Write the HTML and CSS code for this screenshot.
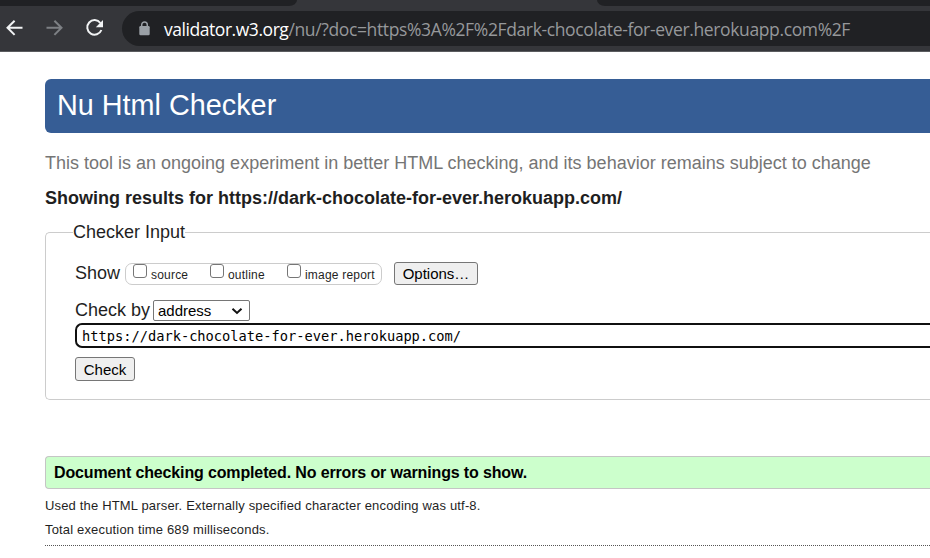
FILE: index.html
```html
<!DOCTYPE html>
<html lang="en">
<head>
<meta charset="utf-8">
<title>Nu Html Checker</title>
<link rel="stylesheet" href="styles.css">
</head>
<body>
<div class="browser">
  <div class="tabs"><div class="tab-left"></div><div class="tab-right"></div></div>
  <div class="toolbar">
    <svg class="nav" width="120" height="35" viewBox="0 0 120 35" fill="none" stroke-width="2">
      <path d="M22.500 16.800H8M14.600 9.700L7.500 16.800l7.100 7.100" stroke="#f1f3f4"/>
      <path d="M46.500 16.800H61M54.400 9.700l7.100 7.100-7.100 7.100" stroke="#7d8084"/>
      <path d="M100.400 12A7.300 7.300 0 1 0 101.400 19" stroke="#f1f3f4"/>
      <path d="M103 9v7.200h-7.200z" fill="#f1f3f4"/>
    </svg>
    <div class="omnibox">
      <svg class="lock" width="11" height="15" viewBox="0 0 11 15">
        <path d="M2.700 6V3.700a2.800 2.800 0 0 1 5.600 0V6" fill="none" stroke="#9aa0a6" stroke-width="1.500"/>
        <rect x=".3" y="5" width="10.400" height="9.300" rx="1.200" fill="#9aa0a6"/>
      </svg>
      <span class="url"><span class="host">validator.w3.org</span><span class="path">/nu/?doc=https%3A%2F%2Fdark-chocolate-for-ever.herokuapp.com%2F</span></span>
    </div>
  </div>
</div>
<main>
  <h1><span>Nu Html Checker</span></h1>
  <p class="tagline"><span>This tool is an ongoing experiment in better HTML checking, and its behavior remains subject to change</span></p>
  <h2><span>Showing results for https://dark-chocolate-for-ever.herokuapp.com/</span></h2>
  <form class="panel">
    <div class="legend">Checker Input</div>
    <div class="row show">
      <span class="label">Show</span>
      <div class="checks">
        <label class="source"><i class="box"></i><span>source</span></label>
        <label class="outline"><i class="box"></i><span>outline</span></label>
        <label class="report"><i class="box"></i><span>image report</span></label>
      </div>
      <button type="button" class="options">Options…</button>
    </div>
    <div class="row by">
      <span class="label">Check by</span>
      <div class="select"><span>address</span>
        <svg width="12" height="8" viewBox="0 0 12 8"><path d="M1.500 1.800L6 6l4.500-4.200" fill="none" stroke="#111" stroke-width="2"/></svg>
      </div>
    </div>
    <div class="address"><span>https://dark-chocolate-for-ever.herokuapp.com/</span></div>
    <button type="button" class="submit">Check</button>
  </form>
  <p class="success"><span>Document checking completed. No errors or warnings to show.</span></p>
  <p class="note"><span class="parser">Used the HTML parser. Externally specified character encoding was utf-8.</span></p>
  <p class="note"><span class="time">Total execution time 689 milliseconds.</span></p>
  <div class="rule"></div>
</main>
</body>
</html>
```
FILE: styles.css
```css
* { box-sizing: border-box; }
body { margin: 0; width: 930px; height: 558px; overflow: hidden; background: #fff; color: #1f1f1f; font-family: "Liberation Sans", Arial, sans-serif; }
h1, h2, p { margin: 0; font-weight: normal; white-space: nowrap; }
.browser { height: 52px; background: #35363a; border-bottom: 1px solid #5b5c5f; }
.tabs { height: 6px; display: flex; justify-content: space-between; }
.tab-left { width: 297px; background: #202124; border-bottom-right-radius: 8px 6px; }
.tab-right { width: 333px; background: #202124; border-bottom-left-radius: 8px 6px; }
.toolbar { display: flex; padding-top: 5px; }
.nav { flex: none; margin-right: 2px; }
.omnibox { flex: 1; height: 35px; display: flex; align-items: center; background: #202124; border-radius: 18px 0 0 18px; padding-left: 17px; }
.lock { flex: none; margin-right: 14px; }
.url { padding-top: 1px; font: 17.500px/34px "Open Sans", "Noto Sans", sans-serif; white-space: nowrap; }
.host { color: #fff; letter-spacing: -.45px; }
.path { color: #96989b; letter-spacing: -.37px; }
main { padding: 27px 0 0 45px; }
h1 { height: 54px; padding-left: 12px; background: #365d95; color: #fff; border-radius: 6px 0 0 6px; font-size: 28.800px; line-height: 53px; }
.tagline { margin-top: 19px; color: #757575; font-size: 18px; line-height: 22px; }
h2 { margin-top: 13px; font-size: 18px; line-height: 22px; font-weight: bold; }
.panel { height: 168px; margin-top: 23px; padding-left: 29px; border: 1px solid #ccc; border-right: 0; border-radius: 5px 0 0 5px; }
.legend { width: 112px; height: 22px; margin: -12px 0 0 -2px; background: #fff; font-size: 18px; line-height: 22px; white-space: nowrap; }
.row { display: flex; font-size: 18px; }
.show { height: 24px; margin-top: 19px; }
.label { line-height: 22px; white-space: nowrap; }
.show .label { width: 50px; }
.checks { width: 257px; height: 22px; margin-top: 1px; display: flex; border: 1px solid #ccc; border-radius: 7px; padding-left: 7px; font-size: 12px; }
.checks label { display: flex; white-space: nowrap; }
.checks span { line-height: 22px; margin-left: 4px; letter-spacing: .2px; }
.source, .outline { width: 77px; }
.box { width: 14px; height: 14px; border: 1px solid #767676; border-radius: 3px; background: #fff; }
button { padding: 0; border: 1px solid #767676; border-radius: 3px; background: #efefef; color: #000; font: 15px/21px "Liberation Sans", Arial, sans-serif; }
.options { width: 84px; height: 23px; margin-left: 12px; }
.by { margin-top: 13px; height: 22px; }
.by .label { width: 78px; }
.select { width: 97px; height: 21px; margin-top: 1px; display: flex; align-items: center; justify-content: space-between; border: 1px solid #767676; border-radius: 2px; padding: 0 6px 0 4px; color: #000; font-size: 15px; }
.address { height: 25px; margin-top: 2px; padding-left: 5px; border: 2px solid #101010; border-right: 0; border-radius: 7px 0 0 7px; color: #000; font: 13.700px/22px "DejaVu Sans Mono", monospace; white-space: nowrap; }
.submit { display: block; width: 60px; height: 24px; margin-top: 9px; line-height: 23px; }
.success { height: 33px; margin-top: 56px; margin-bottom: 5px; padding-left: 8px; border: 1px solid #c5c5c5; border-right: 0; border-radius: 4px 0 0 4px; background: #cfc; color: #000; font-size: 16px; line-height: 31px; font-weight: bold; letter-spacing: -.14px; }
.note { height: 24px; font-size: 13px; line-height: 24px; letter-spacing: .165px; }
.rule { margin-top: 3px; border-top: 1px dotted #555; }
```
